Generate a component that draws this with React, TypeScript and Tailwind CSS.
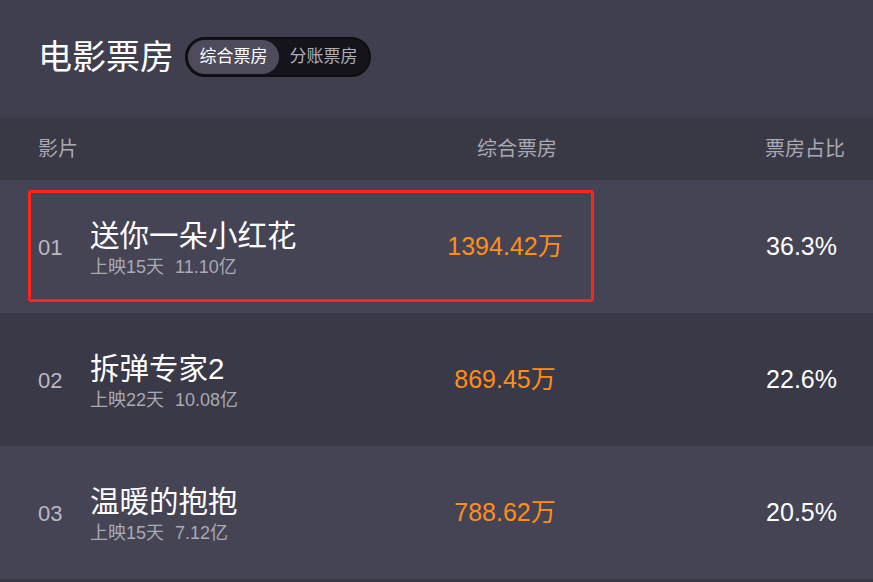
const FONT = '"Liberation Sans", "Noto Sans CJK SC", sans-serif';

type Movie = {
  rank: string;
  name: string;
  days: string;
  total: string;
  box: string;
  share: string;
};

const movies: Movie[] = [
  { rank: "01", name: "送你一朵小红花", days: "上映15天", total: "11.10亿", box: "1394.42万", share: "36.3%" },
  { rank: "02", name: "拆弹专家2", days: "上映22天", total: "10.08亿", box: "869.45万", share: "22.6%" },
  { rank: "03", name: "温暖的抱抱", days: "上映15天", total: "7.12亿", box: "788.62万", share: "20.5%" },
];

function Row({ movie, index }: { movie: Movie; index: number }) {
  const bg = index % 2 === 0 ? "bg-[#454455]" : "bg-[#3a3947]";
  return (
    <div className={`relative flex h-[133px] items-center pl-[38px] pr-[36px] ${bg}`}>
      {index === 0 && (
        <div className="absolute left-[28px] top-[10px] h-[112px] w-[566px] rounded-[3px] border-[3px] border-[#ff2418]" />
      )}
      <div className="w-[52px] pt-[2px] text-[22px] text-[#b9b9c2]">{movie.rank}</div>
      <div className="flex w-[300px] flex-col pt-[2px]">
        <div className="text-[29.5px] leading-[35px] text-white">{movie.name}</div>
        <div className="mt-[3px] flex text-[18px] leading-[22px] text-[#a9a9b2]">
          <span>{movie.days}</span>
          <span className="ml-[11px]">{movie.total}</span>
        </div>
      </div>
      <div className="w-[230px] text-center text-[25px] text-[#ff8d1a]">{movie.box}</div>
      <div className="flex-1" />
      <div className="text-[25px] text-white">{movie.share}</div>
    </div>
  );
}

export default function App() {
  return (
    <div className="h-[582px] w-[873px] overflow-hidden bg-[#3a3947]" style={{ fontFamily: FONT }}>
      <div className="flex h-[118px] items-center bg-[#403f4f] pl-[38px] pb-[4px]">
        <h1 className="text-[34px] font-normal text-white">电影票房</h1>
        <div className="ml-[11px] flex h-[40px] items-center rounded-full border-2 border-[#0e0d12] bg-[#15141a] px-[1px]">
          <div className="flex h-[34px] w-[91px] items-center justify-center rounded-full bg-[#4e4b5c] text-[17px] text-white">
            综合票房
          </div>
          <div className="flex h-[34px] w-[89px] items-center justify-center text-[17px] text-[#b0afb8]">
            分账票房
          </div>
        </div>
      </div>
      <div className="flex h-[62px] items-center bg-[#393845] pl-[38px] pr-[28px] text-[20px] text-[#a9a9b2]">
        <div className="w-[439px]">影片</div>
        <div className="w-[82px]">综合票房</div>
        <div className="flex-1" />
        <div>票房占比</div>
      </div>
      {movies.map((m, i) => (
        <Row key={m.rank} movie={m} index={i} />
      ))}
    </div>
  );
}
